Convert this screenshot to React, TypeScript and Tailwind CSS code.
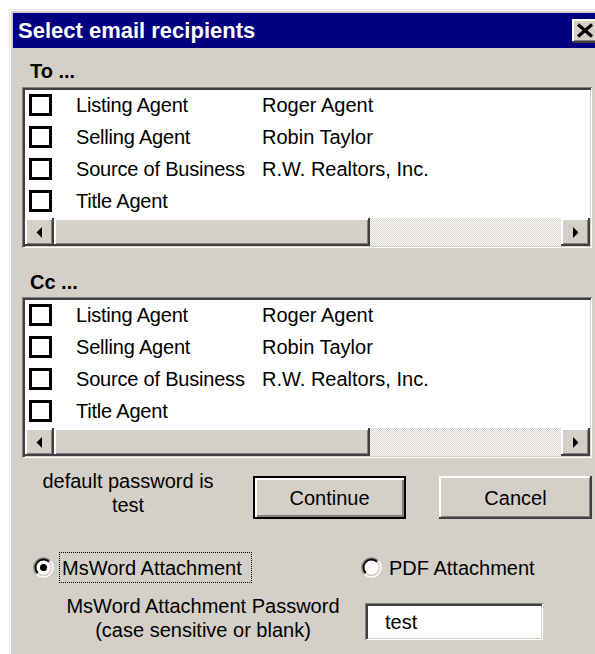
import React from "react";

// Classic 3D bevels
const raised =
  "shadow-[inset_-2px_-2px_#404040,inset_2px_2px_#ffffff,inset_-3px_-3px_#808080]";
const sunken =
  "shadow-[inset_1px_1px_#808080,inset_-1px_-1px_#ffffff,inset_3px_3px_#404040,inset_-2px_-2px_#d4d0c8]";
const checker =
  "bg-[repeating-conic-gradient(#ffffff_0%_25%,#d4d0c8_0%_50%)] bg-[length:2px_2px]";

const recipients = [
  { role: "Listing Agent", name: "Roger Agent" },
  { role: "Selling Agent", name: "Robin Taylor" },
  { role: "Source of Business", name: "R.W. Realtors, Inc." },
  { role: "Title Agent", name: "" },
];

function ArrowButton({ dir }: { dir: "left" | "right" }) {
  return (
    <div className={`w-[29px] h-[28px] bg-[#d4d0c8] flex items-center justify-center ${raised}`}>
      <svg width="7" height="11" viewBox="0 0 7 11">
        {dir === "left" ? (
          <polygon points="6,0 6,11 0.5,5.5" fill="#000" />
        ) : (
          <polygon points="1,0 1,11 6.5,5.5" fill="#000" />
        )}
      </svg>
    </div>
  );
}

function HScroll() {
  return (
    <div className="h-[28px] flex shrink-0">
      <ArrowButton dir="left" />
      <div className={`w-[316px] h-[28px] bg-[#d4d0c8] ${raised}`} />
      <div className={`flex-1 h-[28px] ${checker}`} />
      <ArrowButton dir="right" />
    </div>
  );
}

function RecipientList() {
  return (
    <div
      className={`w-[570px] h-[161px] bg-white flex flex-col pt-[3px] pl-[3px] pr-[2px] pb-[2px] ${sunken}`}
    >
      <div className="flex-1 flex flex-col -mt-[1px]">
        {recipients.map((r) => (
          <div key={r.role} className="h-[32px] flex items-center">
            <div className="ml-[4px] w-[23px] h-[22px] border-[3px] border-black bg-white shrink-0" />
            <span className="ml-[24px] w-[186px] whitespace-nowrap tracking-[-0.2px]">{r.role}</span>
            <span className="whitespace-nowrap">{r.name}</span>
          </div>
        ))}
      </div>
      <HScroll />
    </div>
  );
}

function Radio({ checked }: { checked: boolean }) {
  return (
    <svg width="21" height="21" viewBox="0 0 21 21" className="shrink-0">
      <circle cx="10.5" cy="10.5" r="9.5" fill="#ffffff" />
      <path d="M3.78 17.22 A9.5 9.5 0 0 1 17.22 3.78" stroke="#808080" strokeWidth="1.6" fill="none" />
      <path d="M17.22 3.78 A9.5 9.5 0 0 1 3.78 17.22" stroke="#ffffff" strokeWidth="1.6" fill="none" />
      <path d="M4.84 16.16 A8 8 0 0 1 16.16 4.84" stroke="#000000" strokeWidth="1.8" fill="none" />
      <path d="M16.16 4.84 A8 8 0 0 1 4.84 16.16" stroke="#d4d0c8" strokeWidth="1.6" fill="none" />
      {checked && <circle cx="10.5" cy="10.5" r="3.5" fill="#000000" />}
    </svg>
  );
}

export default function App() {
  return (
    <div
      className="w-[595px] h-[654px] overflow-hidden bg-white text-black text-[20px]"
      style={{ fontFamily: '"Liberation Sans", Arial, sans-serif' }}
    >
      <div className="ml-[9px] mt-[9px] w-[620px] h-[660px] bg-[#d4d0c8] p-[4px] shadow-[inset_1px_1px_#e6e4df,inset_2px_2px_#ffffff]">
        {/* Title bar */}
        <div className="h-[35px] bg-[#000080] flex items-center">
          <span className="pl-[5px] w-[559px] text-white font-bold text-[22px] leading-none whitespace-nowrap">
            Select email recipients
          </span>
          <div className={`w-[29px] h-[24px] bg-[#d4d0c8] flex items-center pl-[4px] ${raised}`}>
            <svg width="18" height="15" viewBox="0 0 18 15">
              <path d="M2 1.5 L16 13.5 M16 1.5 L2 13.5" stroke="#000" strokeWidth="3.2" />
            </svg>
          </div>
        </div>

        {/* Body */}
        <div className="pl-[9px] flex flex-col">
          <div className="pt-[12px] pb-[5px] pl-[8px] leading-[22px] font-bold text-[20px]">To ...</div>
          <RecipientList />
          <div className="pt-[23px] pb-[4px] pl-[8px] leading-[22px] font-bold text-[20px]">Cc ...</div>
          <RecipientList />

          <div className="mt-[11px] flex items-start">
            <div className="w-[212px] text-center leading-[24px]">
              default password is
              <br />
              test
            </div>
            <button
              className="ml-[19px] mt-[7px] w-[153px] h-[43px] bg-[#d4d0c8] border-2 border-black shadow-[inset_2px_2px_#ffffff,inset_-2px_-2px_#808080] flex items-center justify-center"
            >
              Continue
            </button>
            <button
              className={`ml-[33px] mt-[7px] w-[153px] h-[43px] bg-[#d4d0c8] flex items-center justify-center ${raised}`}
            >
              Cancel
            </button>
          </div>

          <div className="mt-[33px] h-[31px] flex items-center">
            <div className="ml-[11px]">
              <Radio checked />
            </div>
            <div className="ml-[5px] w-[193px] h-[31px] border border-dotted border-black flex items-center pl-[2px] whitespace-nowrap">
              MsWord Attachment
            </div>
            <div className="ml-[109px]">
              <Radio checked={false} />
            </div>
            <span className="ml-[7px] whitespace-nowrap">PDF Attachment</span>
          </div>

          <div className="mt-[11px] flex items-start">
            <div className="ml-[19px] w-[324px] text-center leading-[24px] whitespace-nowrap">
              MsWord Attachment Password
              <br />
              (case sensitive or blank)
            </div>
            <div
              className={`mt-[9px] w-[178px] h-[37px] bg-white flex items-center pl-[20px] ${sunken}`}
            >
              test
            </div>
          </div>
        </div>
      </div>
    </div>
  );
}
